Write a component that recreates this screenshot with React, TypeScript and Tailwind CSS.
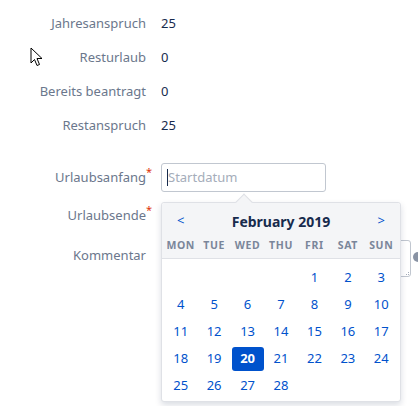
import React from "react";

const font = { fontFamily: '"Noto Sans", "Open Sans", sans-serif' };

function Row({ label, value }: { label: string; value?: string }) {
  return (
    <div className="flex items-center h-[20px]">
      <div className="w-[146px] text-right text-[13px] text-[#6b778c]">{label}</div>
      {value !== undefined && <div className="ml-[15px] text-[13px] text-[#172b4d]">{value}</div>}
    </div>
  );
}

const days: (number | null)[] = [null, null, null, null, 1, 2, 3];
for (let i = 4; i <= 28; i++) days.push(i);

export default function App() {
  return (
    <div className="relative w-[418px] h-[406px] overflow-hidden bg-white" style={font}>
      <div className="flex flex-col pt-[14px]">
        <div className="flex flex-col gap-[14px]">
          <Row label="Jahresanspruch" value="25" />
          <Row label="Resturlaub" value="0" />
          <Row label="Bereits beantragt" value="0" />
          <Row label="Restanspruch" value="25" />
        </div>
        <div className="flex items-center mt-[27px]">
          <div className="w-[146px] text-right text-[13px] text-[#6b778c] relative">
            Urlaubsanfang
            <span className="absolute -right-[6px] -top-[4px] text-[#de350b] text-[11px]">*</span>
          </div>
          <div className="ml-[15px] w-[165px] h-[29px] border border-[#c1c7d0] rounded-[3px] flex items-center pl-[5px]">
            <span className="w-px h-[17px] bg-[#172b4d]" />
            <span className="text-[13px] text-[#a5adba]">Startdatum</span>
          </div>
        </div>
        <div className="flex items-center mt-[14px] h-[20px]">
          <div className="w-[146px] text-right text-[13px] text-[#6b778c] relative">
            Urlaubsende
            <span className="absolute -right-[6px] -top-[4px] text-[#de350b] text-[11px]">*</span>
          </div>
        </div>
        <div className="flex items-start mt-[14px]">
          <div className="w-[146px] shrink-0 text-right text-[13px] text-[#6b778c] pt-[6px]">Kommentar</div>
          <div className="ml-[15px] w-[250px] shrink-0 h-[37px] border border-[#c1c7d0] rounded-[3px] relative">
            <div className="absolute right-[1px] bottom-[1px] grid grid-cols-3 gap-[1px]">
              <span />
              <span />
              <span className="w-[1px] h-[1px] bg-[#a5adba]" />
              <span />
              <span className="w-[1px] h-[1px] bg-[#a5adba]" />
              <span className="w-[1px] h-[1px] bg-[#a5adba]" />
            </div>
          </div>
          <div className="ml-[2px] mt-[12px] w-[10px] h-[10px] shrink-0 rounded-full bg-[#8993a4]" />
        </div>
      </div>

      {/* mouse cursor */}
      <svg className="absolute left-[30px] top-[47px]" width="14" height="21" viewBox="0 0 14 21">
        <path d="M1 1 L1 16 L4.5 12.5 L7 18.5 L9.5 17.5 L7 11.5 L12 11.5 Z" fill="white" stroke="black" strokeWidth="1" strokeLinejoin="miter" />
      </svg>

      {/* calendar popup */}
      <div className="absolute left-[161px] top-[202px] w-[240px] h-[200px] bg-white border border-[#dfe1e6] rounded-[3px] shadow-[0_3px_6px_rgba(9,30,66,0.15)]">
        <div className="absolute -top-[7px] left-[76px] w-[12px] h-[12px] rotate-45 bg-[#f4f5f7] border-l border-t border-[#dfe1e6]" />
        <div className="relative bg-[#f4f5f7] h-[56px] border-b border-[#dfe1e6] rounded-t-[3px]">
          <div className="flex items-center justify-between h-[35px] pt-[1px] px-[15px]">
            <span className="text-[13px] text-[#0052cc]">&lt;</span>
            <span className="text-[14px] font-bold text-[#172b4d]">February 2019</span>
            <span className="text-[13px] text-[#0052cc]">&gt;</span>
          </div>
          <div className="grid grid-cols-7 px-[2px]">
            {["MON", "TUE", "WED", "THU", "FRI", "SAT", "SUN"].map((d) => (
              <div key={d} className="text-center text-[10.5px] font-bold tracking-[0.06em] text-[#7a869a]">
                {d}
              </div>
            ))}
          </div>
        </div>
        <div className="grid grid-cols-7 px-[2px] pt-[5px]">
          {days.map((d, i) => (
            <div key={i} className="h-[27px] flex items-center justify-center">
              {d !== null &&
                (d === 20 ? (
                  <span className="w-[32px] h-[24px] rounded-[3px] bg-[#0052cc] text-white font-bold text-[13px] flex items-center justify-center">
                    {d}
                  </span>
                ) : (
                  <span className="text-[13px] text-[#0052cc]">{d}</span>
                ))}
            </div>
          ))}
        </div>
      </div>
    </div>
  );
}
